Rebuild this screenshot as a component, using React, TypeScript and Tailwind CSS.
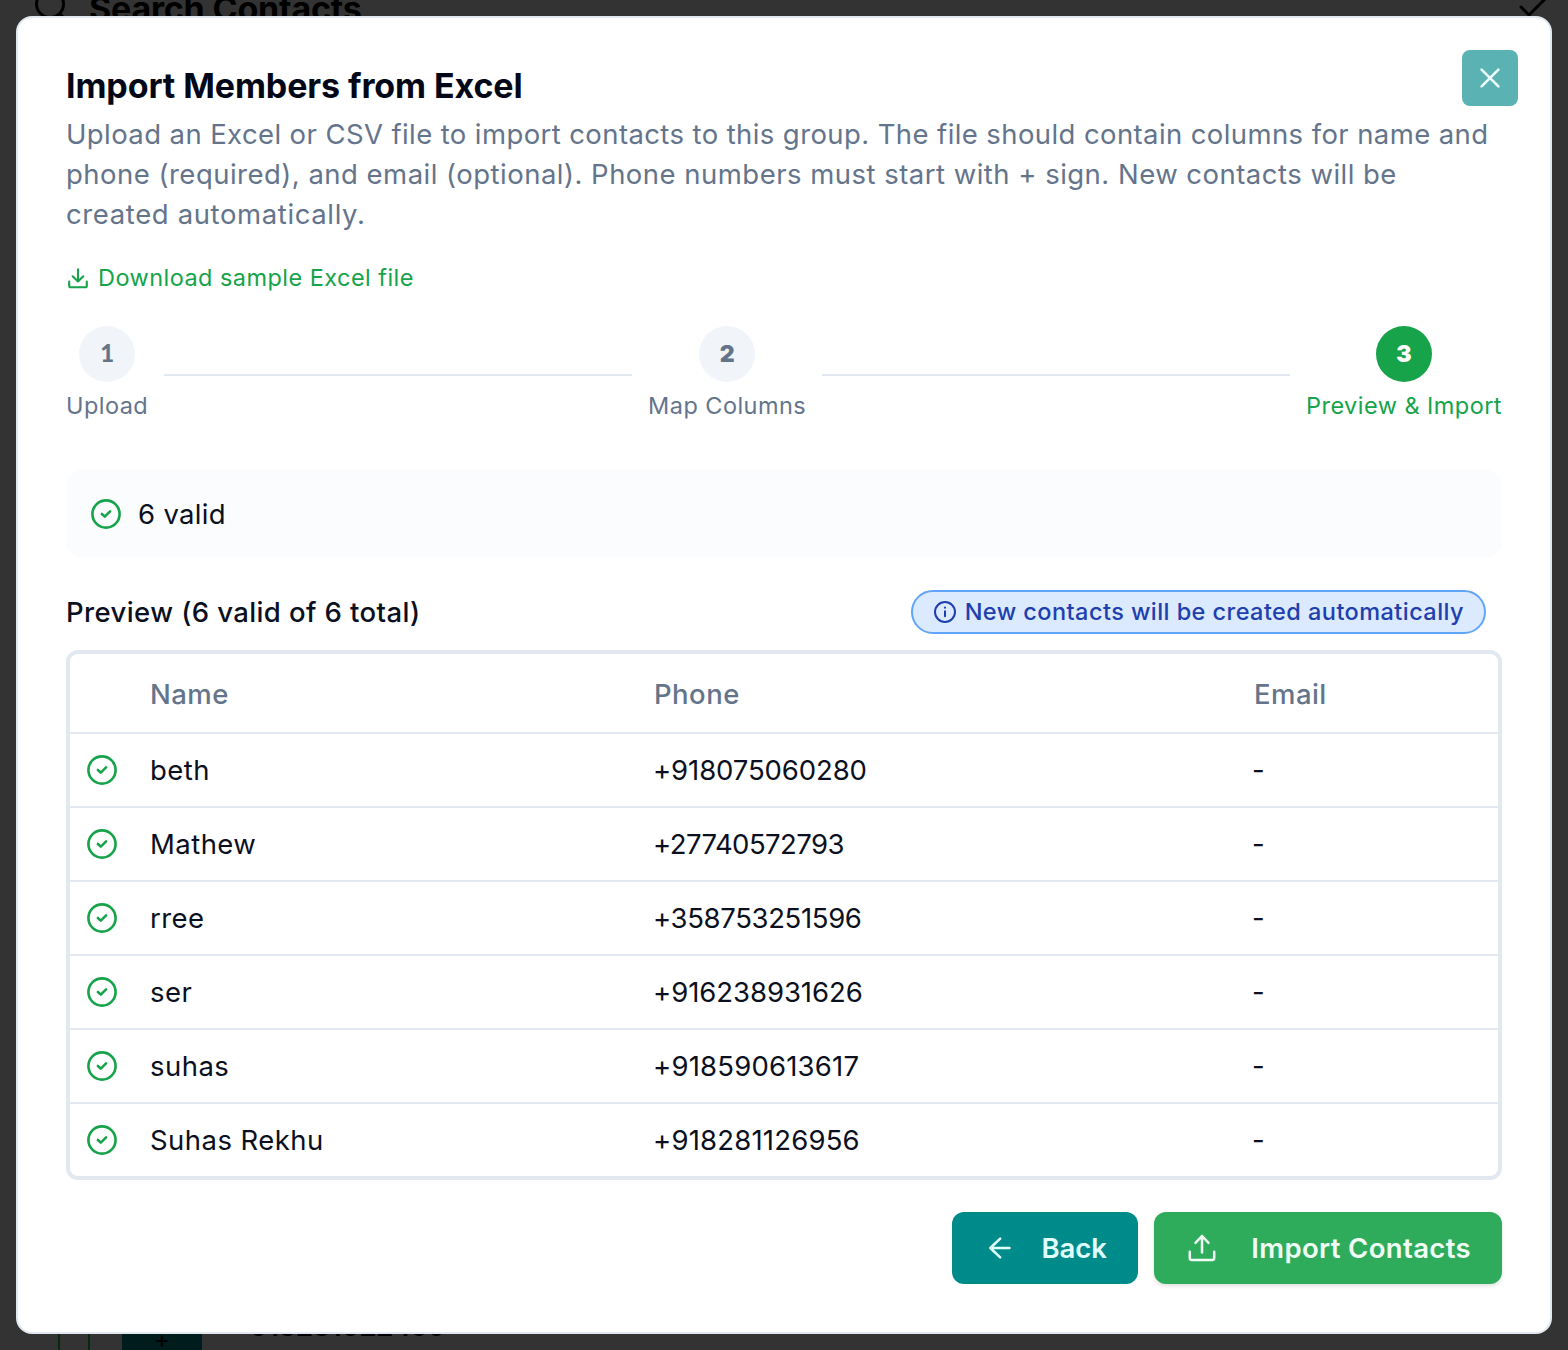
import type { ReactNode } from "react";
import { clsx } from "clsx";

const contacts = [
  { name: "beth", phone: "+918075060280", spacing: "tracking-[-0.1px]" },
  { name: "Mathew", phone: "+27740572793", spacing: "tracking-[-0.55px]" },
  { name: "rree", phone: "+358753251596", spacing: "tracking-[-0.35px]" },
  { name: "ser", phone: "+916238931626", spacing: "tracking-[-0.05px]" },
  { name: "suhas", phone: "+918590613617", spacing: "tracking-[0.2px]" },
  { name: "Suhas Rekhu", phone: "+918281126956", spacing: "tracking-[0.2px]" },
];

const Icon = ({ size, stroke = 2, className, children }: { size: number; stroke?: number; className?: string; children: ReactNode }) => (
  <svg
    width={size}
    height={size}
    viewBox={`0 0 ${size} ${size}`}
    fill="none"
    stroke="currentColor"
    strokeWidth={stroke}
    strokeLinecap="round"
    strokeLinejoin="round"
    className={clsx("shrink-0", className)}
  >
    {children}
  </svg>
);

const ValidIcon = () => (
  <Icon size={32} stroke={2.6} className="text-[#16a34a]">
    <circle cx="16" cy="16" r="13.6" />
    <path d="M11.9 16l2.9 2.6 5.3-5.2" />
  </Icon>
);

const Step = ({ number, label, active }: { number: number; label: string; active?: boolean }) => (
  <div className="flex flex-col items-center">
    <div
      className={clsx(
        "flex h-14 w-14 items-center justify-center rounded-full font-black",
        number === 1 ? "pb-0.5 font-['Lato',sans-serif] text-2xl" : "text-[23px]",
        active ? "bg-[#16a34a] text-white" : "bg-[#f1f5f9] text-[#64748b]"
      )}
    >
      {number}
    </div>
    <span
      className={clsx(
        "mt-2 text-[23.5px] leading-8 tracking-[0.45px] whitespace-nowrap",
        active ? "text-[#16a34a]" : "text-[#64748b]"
      )}
    >
      {label}
    </span>
  </div>
);

const StepLine = () => <div className="mx-4 mt-0.5 h-0.5 flex-1 bg-[#e2e8f0]" />;

// Page that sits dimmed behind the dialog
const Backdrop = () => (
  <div className="absolute inset-0 flex flex-col justify-between overflow-hidden bg-[#333333] text-black">
    <div className="-mt-4 flex h-12 items-center pl-[34px] pr-5">
      <Icon size={36} stroke={3}>
        <circle cx="16" cy="14" r="13.5" />
        <path d="M26 24l7 7" />
      </Icon>
      <span className="ml-[19px] text-[34px] font-bold tracking-[-0.2px]">Search Contacts</span>
      <Icon size={32} stroke={3} className="ml-auto">
        <path d="M5 15l8 8 16-16" />
      </Icon>
    </div>
    <div className="flex h-8 pl-[58px]">
      <div className="w-8 border-x-2 border-[#06290f]" />
      <div className="ml-8 flex w-20 justify-center bg-[#001c1c] pt-2.5 text-2xl leading-6">+</div>
      <span className="-mt-2 ml-12 text-[28px] leading-8 font-semibold tracking-[-0.6px]">918281022499</span>
    </div>
  </div>
);

export default function App() {
  return (
    <div className="relative h-[1350px] w-[1568px] overflow-hidden p-4 font-['Inter',sans-serif] text-[#0b1020]">
      <Backdrop />
      <div className="relative h-[1318px] rounded-2xl border-2 border-[#e2e8f0] bg-white p-12">
        <button className="absolute top-8 right-8 flex h-14 w-14 items-center justify-center rounded-lg bg-[#5ab2b2] text-[#f0ffff]">
          <Icon size={32} stroke={2.6}>
            <path d="M7.6 7.6l16.8 16.8M24.4 7.6L7.6 24.4" />
          </Icon>
        </button>

        <h2 className="pt-0.5 text-[34px] leading-9 font-bold tracking-[-0.1px] text-[#020817]">Import Members from Excel</h2>
        <p className="mt-2.5 text-[27.5px] leading-10 text-[#64748b]">
          <span className="tracking-[0.4px]">
            Upload an Excel or CSV file to import contacts to this group. The file should contain columns for name and
          </span>
          <br />
          <span className="tracking-[0.48px]">
            phone (required), and email (optional). Phone numbers must start with + sign. New contacts will be
          </span>
          <br />
          <span className="tracking-[0.62px]">created automatically.</span>
        </p>

        <a className="mt-7 flex h-8 items-center gap-2 text-[23.5px] tracking-[0.45px] text-[#16a34a]">
          <Icon size={24} stroke={2.1}>
            <path d="M12 3.3v12.2M6.7 10.3l5.3 5.2 5.3-5.2M3.2 15.5v4.2a1.6 1.6 0 0 0 1.6 1.6h14.4a1.6 1.6 0 0 0 1.6-1.6v-4.2" />
          </Icon>
          Download sample Excel file
        </a>

        <div className="mt-8 flex items-center">
          <Step number={1} label="Upload" />
          <StepLine />
          <Step number={2} label="Map Columns" />
          <StepLine />
          <Step number={3} label="Preview & Import" active />
        </div>

        <div className="mt-12 flex h-[88px] items-center gap-4 rounded-2xl bg-[#fafcfd] px-6 text-[27.5px] tracking-[0.3px]">
          <ValidIcon />
          <span className="pt-px">6 valid</span>
        </div>

        <div className="mt-8 flex h-11 items-center justify-between pr-4">
          <h3 className="pt-px text-[27.5px] font-medium tracking-[0.4px]">Preview (6 valid of 6 total)</h3>
          <div className="flex h-11 items-center gap-2 rounded-full border-2 border-[#60a5fa] bg-[#dbeafe] px-5 text-[23.5px] font-medium tracking-[0.44px] text-[#1e40af]">
            <Icon size={24}>
              <circle cx="12" cy="12" r="10" />
              <path d="M12 11.3v4.9M12 7.6v.1" />
            </Icon>
            <span>New contacts will be created automatically</span>
          </div>
        </div>

        <div className="mt-4 rounded-xl border-4 border-[#e2e8f0] text-[27.5px] tracking-[0.45px]">
          <div className="grid h-20 grid-cols-[80px_504px_600px_1fr] items-center border-b-2 border-[#e2e8f0] pt-[3px] font-medium text-[#64748b]">
            <span />
            <span>Name</span>
            <span>Phone</span>
            <span>Email</span>
          </div>
          {contacts.map((contact) => (
            <div
              key={contact.phone}
              className="grid h-[74px] grid-cols-[80px_504px_600px_1fr] items-center border-b-2 border-[#e2e8f0] last:h-[72px] last:border-b-0"
            >
              <span className="pl-4">
                <ValidIcon />
              </span>
              <span className="pt-px">{contact.name}</span>
              <span className={clsx("-ml-px pt-px", contact.spacing)}>{contact.phone}</span>
              <span className="-ml-0.5 pt-px">-</span>
            </div>
          ))}
        </div>

        <div className="mt-8 flex justify-end gap-4 text-[27.5px] font-semibold">
          <button className="flex h-[72px] w-[186px] items-center justify-between rounded-xl bg-[#008b8b] pr-[31px] pl-8 text-[#e0ffff]">
            <Icon size={32} stroke={2.5}>
              <path d="M25.5 16H6.3M16.2 6.6L6.3 16l9.9 9.4" />
            </Icon>
            <span className="pt-px">Back</span>
          </button>
          <button className="flex h-[72px] w-[348px] items-center justify-between rounded-xl bg-[#2eac5c] pr-[31px] pl-8 tracking-[0.35px] text-[#f0fdf4] shadow-[0_2px_4px_rgba(0,0,0,0.12)]">
            <Icon size={32} stroke={2.5}>
              <path d="M16 20.5V4M9.5 10.8L16 4l6.5 6.8M3.8 19.8v6.2a2 2 0 0 0 2 2h20.4a2 2 0 0 0 2-2v-6.2" />
            </Icon>
            <span className="pt-px">Import Contacts</span>
          </button>
        </div>
      </div>
    </div>
  );
}
